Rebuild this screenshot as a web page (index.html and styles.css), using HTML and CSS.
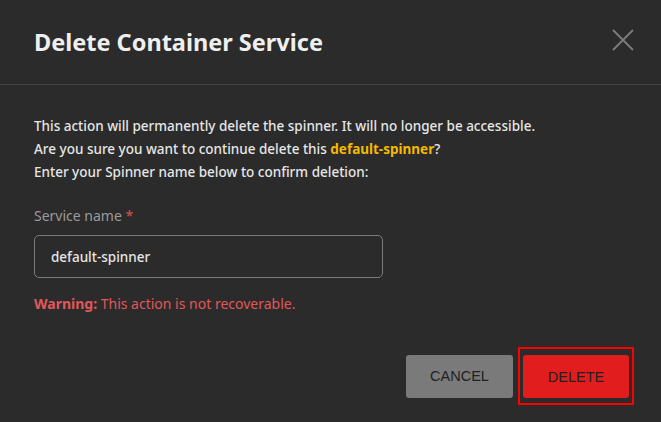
FILE: index.html
```html
<!DOCTYPE html>
<html lang="en">
<head>
    <meta charset="UTF-8">
    <title>Delete Container Service</title>
    <link rel="stylesheet" href="styles.css">
</head>
<body>
    <div class="modal">
        <div class="modal-header">
            <h2>Delete Container Service</h2>
            <span class="close-button">
                <svg width="22" height="22" viewBox="0 0 22 22">
                    <path d="M1 1 L21 21 M21 1 L1 21" stroke="#7a7a7a" stroke-width="2" fill="none"/>
                </svg>
            </span>
        </div>
        <div class="modal-body">
            <p class="info">
                This action will permanently delete the spinner. It will no longer be accessible.<br>
                Are you sure you want to continue delete this <span class="highlight">default-spinner</span>?<br>
                Enter your Spinner name below to confirm deletion:
            </p>
            <label class="field-label" for="serviceName">Service name <span class="required">*</span></label>
            <input type="text" id="serviceName" class="field-input" value="default-spinner">
            <p class="warning"><b>Warning:</b> This action is not recoverable.</p>
        </div>
        <div class="modal-footer">
            <button class="btn btn-cancel">CANCEL</button>
            <span class="focus-ring">
                <button class="btn btn-delete">DELETE</button>
            </span>
        </div>
    </div>
</body>
</html>
```

FILE: styles.css
```css
html, body {
    margin: 0;
    padding: 0;
    background-color: #2b2b2b;
    font-family: "Noto Sans", Lato, sans-serif;
}
.modal {
    width: 661px;
    height: 422px;
    background-color: #2b2b2b;
}
.modal-header {
    height: 85px;
    border-bottom: 1px solid #444;
    display: flex;
    align-items: center;
    justify-content: space-between;
    padding: 0 27px 0 34px;
    box-sizing: border-box;
}
.modal-header h2 {
    margin: 0;
    color: #efefef;
    font-size: 23.5px;
    font-weight: bold;
}
.close-button {
    display: flex;
    margin-top: -5px;
}
.modal-body {
    padding: 30px 34px 0 34px;
}
.info {
    margin: 0;
    color: #e6e6e6;
    font-size: 13.5px;
    font-weight: 500;
    line-height: 23px;
}
.highlight {
    color: #f5b900;
    font-weight: bold;
}
.field-label {
    display: block;
    margin-top: 23px;
    color: #9a9a9a;
    font-size: 14px;
    line-height: 18px;
}
.required {
    color: #d9534f;
}
.field-input {
    display: block;
    margin-top: 10px;
    width: 349px;
    height: 43px;
    box-sizing: border-box;
    background: transparent;
    border: 1px solid #7a7a7a;
    border-radius: 5px;
    padding: 0 16px;
    color: #e6e6e6;
    font-family: inherit;
    font-size: 13.5px;
    font-weight: 500;
}
.warning {
    margin: 17px 0 0 0;
    color: #e0575b;
    font-size: 14px;
    line-height: 18px;
}
.modal-footer {
    display: flex;
    justify-content: flex-end;
    align-items: center;
    gap: 5px;
    padding: 34px 27px 0 0;
}
.btn {
    height: 43px;
    border: none;
    border-radius: 3px;
    font-family: "Liberation Sans", Arial, sans-serif;
    font-size: 14.5px;
    color: #222;
    cursor: pointer;
}
.btn-cancel {
    width: 107px;
    background-color: #7a7a7a;
}
.focus-ring {
    display: flex;
    padding: 6px 3px 5px 3px;
    border: 2px solid #ff0000;
}
.btn-delete {
    width: 106px;
    background-color: #e21d1d;
}
```
